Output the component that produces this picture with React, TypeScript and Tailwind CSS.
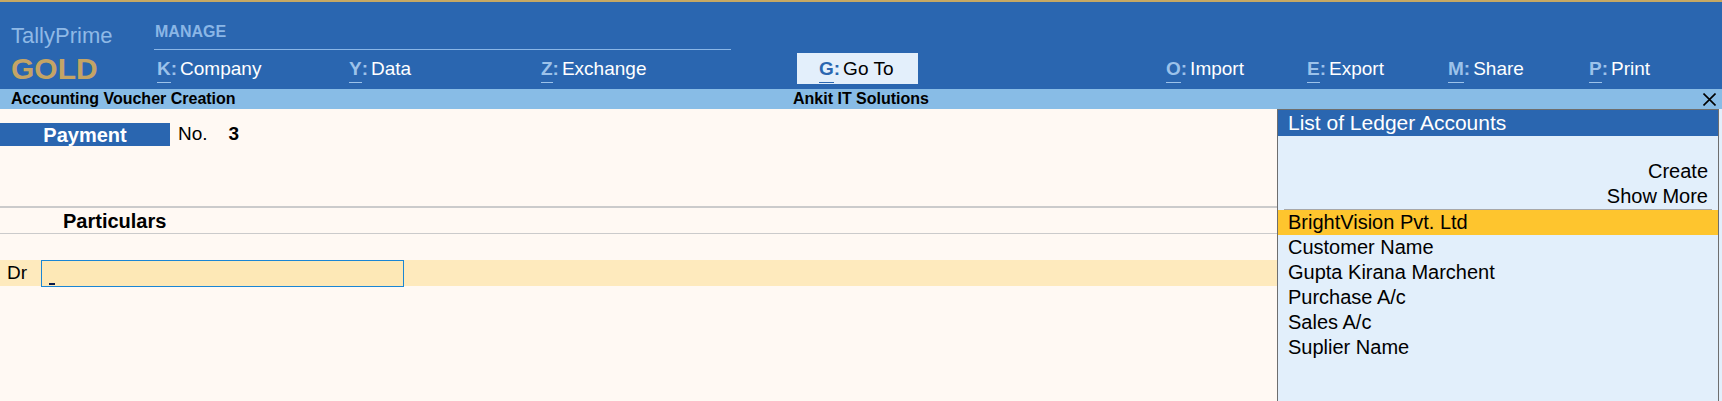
const leftMenu = [
  { key: 'K', label: 'Company', width: 'w-[192px]' },
  { key: 'Y', label: 'Data', width: 'w-[192px]' },
  { key: 'Z', label: 'Exchange', width: 'w-[256px]' },
];

const rightMenu = [
  { key: 'O', label: 'Import' },
  { key: 'E', label: 'Export' },
  { key: 'M', label: 'Share' },
  { key: 'P', label: 'Print' },
];

const ledgers = [
  'BrightVision Pvt. Ltd',
  'Customer Name',
  'Gupta Kirana Marchent',
  'Purchase A/c',
  'Sales A/c',
  'Suplier Name',
];

function MenuItem({ k, label, className = '' }: { k: string; label: string; className?: string }) {
  return (
    <div className={`flex items-baseline text-[19px] leading-[22px] ${className}`}>
      <span className="relative font-bold text-[#9cc2ea]">
        {k}
        <span className="absolute left-0 right-0 top-[24px] h-px bg-[#9cc2ea]" />
      </span>
      <span className="font-bold text-[#9cc2ea]">:</span>
      <span className="ml-[3px] text-white">{label}</span>
    </div>
  );
}

export default function App() {
  return (
    <div className="flex h-[401px] w-[1722px] flex-col overflow-hidden bg-[#fff9f3] font-['Liberation_Sans',Arial,sans-serif] text-black">
      <div className="h-[2px] bg-[#c6a863]" />

      {/* top menu bar */}
      <header className="flex h-[87px] bg-[#2a66b0]">
        <div className="w-[154px] shrink-0 pl-[11px] pt-[21px]">
          <div className="text-[22px] leading-[26px] text-[#8fb9e6]">TallyPrime</div>
          <div className="mt-[4px] text-[30px] font-bold leading-[32px] text-[#c4a465]">GOLD</div>
        </div>

        <div className="flex flex-1 flex-col">
          <div className="w-[577px] border-b border-[#8ab6e6] pb-[9px] pl-[1px] pt-[22px] text-[16px] font-bold leading-[16px] text-[#8ab6e6]">
            MANAGE
          </div>
          <div className="flex items-center pt-[3px]">
            <div className="flex pl-[3px]">
              {leftMenu.map((m) => (
                <MenuItem key={m.key} k={m.key} label={m.label} className={m.width} />
              ))}
            </div>
            <div className="flex h-[31px] w-[121px] items-center bg-[#e3effb] pl-[22px] text-[19px] leading-[22px]">
              <span className="relative font-bold text-[#2a66b0]">
                G
                <span className="absolute left-0 right-0 top-[24px] h-px bg-[#2a66b0]" />
              </span>
              <span className="font-bold text-[#2a66b0]">:</span>
              <span className="ml-[3px] text-black">Go To</span>
            </div>
            <div className="ml-[248px] flex">
              {rightMenu.map((m) => (
                <MenuItem key={m.key} k={m.key} label={m.label} className="w-[141px]" />
              ))}
            </div>
          </div>
        </div>
      </header>

      {/* title bar */}
      <div className="relative flex h-[20px] items-center bg-[#88bce6] px-[11px] text-[16px] font-bold leading-[20px]">
        <span>Accounting Voucher Creation</span>
        <span className="absolute left-1/2 -translate-x-1/2">Ankit IT Solutions</span>
        <svg className="absolute right-[6px] top-[4px]" width="13" height="13" viewBox="0 0 13 13">
          <path d="M0.5 0.5 L12.5 12.5 M12.5 0.5 L0.5 12.5" stroke="#000" strokeWidth="1.6" />
        </svg>
      </div>

      <div className="flex flex-1">
        {/* voucher area */}
        <main className="w-[1277px] shrink-0">
          <div className="mt-[14px] flex h-[23px] items-center">
            <div className="flex h-full w-[170px] items-center justify-center bg-[#2a66b0] text-[20px] font-bold text-white">
              Payment
            </div>
            <span className="ml-[8px] text-[19px]">No.</span>
            <span className="ml-[21px] text-[19px] font-bold">3</span>
          </div>

          <div className="mt-[60px] h-[2px] bg-[#cbcbcb]" />
          <div className="flex h-[26px] items-center border-b border-[#cbcbcb] pl-[63px] text-[20px] font-bold">
            Particulars
          </div>

          <div className="mt-[26px] flex h-[26px] items-center bg-[#feeabd]">
            <span className="w-[41px] pl-[7px] text-[19px]">Dr</span>
            <div className="relative h-[27px] w-[363px] border border-[#1a86d4] bg-[#fde8b6]">
              <span className="absolute left-[7px] top-[22px] h-[2px] w-[6px] bg-[#0a1a4a]" />
            </div>
          </div>
        </main>

        {/* list panel */}
        <aside className="flex w-[442px] shrink-0 flex-col border-x border-t border-[#6e6e6e] bg-[#e2effb]">
          <div className="flex h-[26px] items-center bg-[#2a66b0] pl-[10px] text-[21px] text-white">
            List of Ledger Accounts
          </div>
          <div className="flex flex-col items-end pr-[10px] pt-[23px] text-[20px] leading-[25px]">
            <span>Create</span>
            <span>Show More</span>
          </div>
          <div className="mx-[6px] h-px bg-[#a8a8a8]" />
          <ul className="text-[20px] leading-[25px]">
            {ledgers.map((name, i) => (
              <li key={name} className={`pl-[10px] ${i === 0 ? 'bg-[#fec52e]' : ''}`}>
                {name}
              </li>
            ))}
          </ul>
        </aside>
        <div className="flex-1 bg-[#e2effb]" />
      </div>
    </div>
  );
}
